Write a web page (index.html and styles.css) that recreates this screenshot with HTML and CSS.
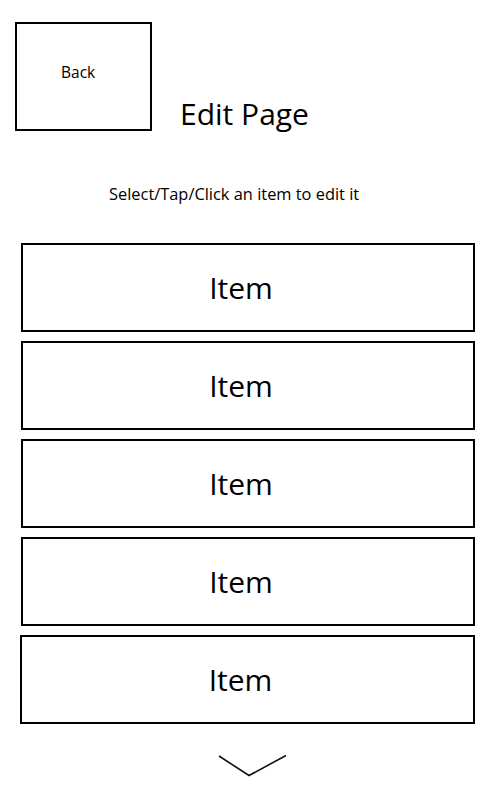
FILE: index.html
```html
<!DOCTYPE html>
<html>
<head>
<meta charset="utf-8">
<link rel="stylesheet" href="styles.css">
</head>
<body>
<div class="page">
  <header class="header">
    <div class="back">Back</div>
    <h1 class="title">Edit Page</h1>
  </header>
  <p class="hint">Select/Tap/Click an item to edit it</p>
  <div class="list">
    <div class="item">Item</div>
    <div class="item">Item</div>
    <div class="item">Item</div>
    <div class="item">Item</div>
    <div class="item last">Item</div>
  </div>
  <div class="more">
    <svg width="70" height="24" viewBox="0 0 70 24"><path d="M1 2 L31 21.5 L68 1.5" fill="none" stroke="#111" stroke-width="1.6"/></svg>
  </div>
</div>
</body>
</html>
```
FILE: styles.css
```css
html, body {
  margin: 0;
  padding: 0;
  background: #fff;
}
.page {
  width: 500px;
  font-family: "Open Sans", "Noto Sans", sans-serif;
  color: #000;
}
.header {
  display: flex;
  align-items: flex-end;
  padding: 22px 0 0 15px;
}
.back {
  box-sizing: border-box;
  width: 137px;
  height: 109px;
  border: 2px solid #000;
  font-size: 15.5px;
  line-height: 22px;
  padding: 37px 0 0 44px;
}
.title {
  margin: 0 0 -3px 28px;
  font-size: 30px;
  font-weight: normal;
  line-height: 40px;
}
.hint {
  margin: 51px 0 0 109px;
  font-size: 16.4px;
  line-height: 24px;
}
.list {
  display: flex;
  flex-direction: column;
  gap: 9px;
  margin: 37px 0 0 21px;
  width: 454px;
}
.item {
  box-sizing: border-box;
  height: 89px;
  border: 2px solid #000;
  display: flex;
  align-items: center;
  justify-content: center;
  padding-right: 14px;
  font-size: 30px;
}
.item.last {
  margin-left: -1px;
}
.more {
  display: flex;
  justify-content: center;
  margin-top: 30px;
  padding-left: 5px;
}
```
